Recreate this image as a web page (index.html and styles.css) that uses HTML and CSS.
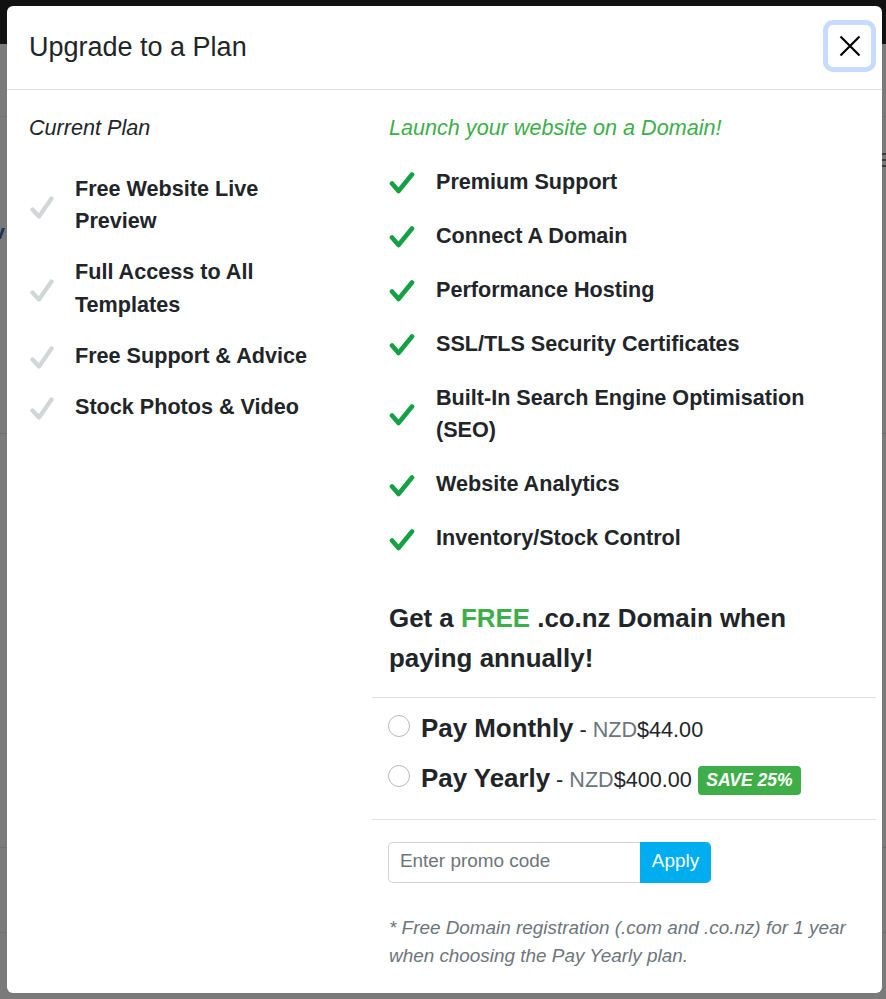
FILE: index.html
```html
<!DOCTYPE html>
<html lang="en">
<head>
<meta charset="utf-8">
<title>Upgrade to a Plan</title>
<link rel="stylesheet" href="styles.css">
</head>
<body>
<div class="page">
  <div class="topbar"></div>
  <div class="band band-a"></div>
  <div class="band band-b">
    <div class="band-row">
      <span class="ghost-mark"></span>
      <span class="menu-glyph"></span>
    </div>
  </div>
  <div class="band band-c"></div>
  <div class="band band-d"></div>
</div>

<div class="modal" role="dialog" aria-labelledby="modal-title">
  <div class="modal-header">
    <h5 class="modal-title" id="modal-title">Upgrade to a Plan</h5>
    <button class="close" type="button" aria-label="Close">
      <svg width="22" height="22" viewBox="0 0 22 22" aria-hidden="true"><path d="M1.5 1.5 L20.5 20.5 M20.5 1.5 L1.5 20.5" stroke="#000" stroke-width="2.2" fill="none"/></svg>
    </button>
  </div>
  <div class="modal-body">
    <div class="col-left">
      <p class="plan-label">Current Plan</p>
      <ul class="features features-current">
        <li><span class="icon"><svg width="24" height="27" viewBox="0 0 24 27"><path d="M2.5 15.5 L9 22.5 L21.5 4.5" stroke="#d1d6d6" stroke-width="4.2" stroke-linecap="round" stroke-linejoin="round" fill="none"/></svg></span><span class="feature-text">Free Website Live Preview</span></li>
        <li><span class="icon"><svg width="24" height="27" viewBox="0 0 24 27"><path d="M2.5 15.5 L9 22.5 L21.5 4.5" stroke="#d1d6d6" stroke-width="4.2" stroke-linecap="round" stroke-linejoin="round" fill="none"/></svg></span><span class="feature-text">Full Access to All Templates</span></li>
        <li><span class="icon"><svg width="24" height="27" viewBox="0 0 24 27"><path d="M2.5 15.5 L9 22.5 L21.5 4.5" stroke="#d1d6d6" stroke-width="4.2" stroke-linecap="round" stroke-linejoin="round" fill="none"/></svg></span><span class="feature-text">Free Support &amp; Advice</span></li>
        <li><span class="icon"><svg width="24" height="27" viewBox="0 0 24 27"><path d="M2.5 15.5 L9 22.5 L21.5 4.5" stroke="#d1d6d6" stroke-width="4.2" stroke-linecap="round" stroke-linejoin="round" fill="none"/></svg></span><span class="feature-text">Stock Photos &amp; Video</span></li>
      </ul>
    </div>

    <div class="col-right">
      <p class="plan-label green">Launch your website on a Domain!</p>
      <ul class="features features-premium">
        <li><span class="icon"><svg width="26" height="26" viewBox="0 0 26 26"><path d="M3 13.5 L9.5 21 L23 4.5" stroke="#15a045" stroke-width="4.6" stroke-linecap="round" stroke-linejoin="round" fill="none"/></svg></span><span class="feature-text">Premium Support</span></li>
        <li><span class="icon"><svg width="26" height="26" viewBox="0 0 26 26"><path d="M3 13.5 L9.5 21 L23 4.5" stroke="#15a045" stroke-width="4.6" stroke-linecap="round" stroke-linejoin="round" fill="none"/></svg></span><span class="feature-text">Connect A Domain</span></li>
        <li><span class="icon"><svg width="26" height="26" viewBox="0 0 26 26"><path d="M3 13.5 L9.5 21 L23 4.5" stroke="#15a045" stroke-width="4.6" stroke-linecap="round" stroke-linejoin="round" fill="none"/></svg></span><span class="feature-text">Performance Hosting</span></li>
        <li><span class="icon"><svg width="26" height="26" viewBox="0 0 26 26"><path d="M3 13.5 L9.5 21 L23 4.5" stroke="#15a045" stroke-width="4.6" stroke-linecap="round" stroke-linejoin="round" fill="none"/></svg></span><span class="feature-text">SSL/TLS Security Certificates</span></li>
        <li><span class="icon"><svg width="26" height="26" viewBox="0 0 26 26"><path d="M3 13.5 L9.5 21 L23 4.5" stroke="#15a045" stroke-width="4.6" stroke-linecap="round" stroke-linejoin="round" fill="none"/></svg></span><span class="feature-text">Built-In Search Engine Optimisation (SEO)</span></li>
        <li><span class="icon"><svg width="26" height="26" viewBox="0 0 26 26"><path d="M3 13.5 L9.5 21 L23 4.5" stroke="#15a045" stroke-width="4.6" stroke-linecap="round" stroke-linejoin="round" fill="none"/></svg></span><span class="feature-text">Website Analytics</span></li>
        <li><span class="icon"><svg width="26" height="26" viewBox="0 0 26 26"><path d="M3 13.5 L9.5 21 L23 4.5" stroke="#15a045" stroke-width="4.6" stroke-linecap="round" stroke-linejoin="round" fill="none"/></svg></span><span class="feature-text">Inventory/Stock Control</span></li>
      </ul>

      <p class="promo-head">Get a <span class="green-strong">FREE</span> .co.nz Domain when paying annually!</p>

      <hr class="divider divider-top">

      <div class="options">
        <label class="option">
          <span class="radio"></span>
          <span class="option-text"><strong class="option-name">Pay Monthly</strong> - <span class="muted">NZD</span>$44.00</span>
        </label>
        <label class="option">
          <span class="radio"></span>
          <span class="option-text"><strong class="option-name">Pay Yearly</strong> - <span class="muted">NZD</span>$400.00</span>
          <span class="badge">SAVE 25%</span>
        </label>
      </div>

      <hr class="divider divider-bottom">

      <div class="promo">
        <input class="promo-input" type="text" placeholder="Enter promo code">
        <button class="promo-btn" type="button">Apply</button>
      </div>

      <p class="note">* Free Domain registration (.com and .co.nz) for 1 year when choosing the Pay Yearly plan.</p>
    </div>
  </div>
</div>
</body>
</html>
```

FILE: styles.css
```css
* {
  box-sizing: border-box;
}

html, body {
  margin: 0;
  padding: 0;
}

body {
  width: 886px;
  height: 999px;
  overflow: hidden;
  background: #7a7a7a;
  font-family: "Liberation Sans", Arial, sans-serif;
  color: #212529;
  position: relative;
}

/* ---------- dimmed page behind the dialog ---------- */
.page {
  display: flex;
  flex-direction: column;
}

.topbar {
  height: 44px;
  background: #111111;
}

.band {
  border-bottom: 1px solid #6d6d6d;
}

.band-a {
  height: 73px;
  border-bottom-color: #727272;
}

.band-b {
  height: 317px;
}

.band-row {
  display: flex;
  align-items: flex-start;
  justify-content: space-between;
}

.ghost-mark {
  display: block;
  width: 3px;
  height: 11px;
  margin-top: 111px;
  background: #1d3550;
  transform: skewX(-20deg);
}

.menu-glyph {
  display: block;
  width: 14px;
  height: 14px;
  margin: 36px -10px 0 0;
  background:
    linear-gradient(#3a3a3a, #3a3a3a) 0 0 / 100% 2px no-repeat,
    linear-gradient(#3a3a3a, #3a3a3a) 0 6px / 100% 2px no-repeat,
    linear-gradient(#3a3a3a, #3a3a3a) 0 12px / 100% 2px no-repeat;
}

.band-c {
  height: 414px;
}

.band-d {
  height: 85px;
}

/* ---------- dialog ---------- */
.modal {
  position: absolute;
  top: 6px;
  left: 7px;
  width: 875px;
  background: #ffffff;
  border-radius: 6px;
}

.modal-header {
  display: flex;
  align-items: center;
  justify-content: space-between;
  padding: 21px 6px 22px 22px;
  border-bottom: 1px solid #dee2e6;
}

.modal-title {
  margin: 0;
  font-size: 27px;
  line-height: 40px;
  font-weight: 400;
  color: #212529;
}

.close {
  width: 53px;
  height: 52px;
  margin: -7px 0 -5px 0;
  padding: 0;
  display: flex;
  align-items: center;
  justify-content: center;
  background: #ffffff;
  border: 5px solid #c6dbfd;
  border-radius: 10px;
  cursor: pointer;
}

.modal-body {
  display: grid;
  grid-template-columns: 365px 504px;
  padding: 22px 0 22px 0;
}

.col-left {
  padding: 0 42px 0 22px;
}

.col-right {
  padding: 0 20px 0 17px;
}

.plan-label {
  margin: 0;
  font-size: 21.6px;
  line-height: 32.4px;
  font-style: italic;
  color: #212529;
}

.green {
  color: #3dae4a;
}

.features {
  list-style: none;
  margin: 0;
  padding: 0;
  display: flex;
  flex-direction: column;
}

.features li {
  display: flex;
  align-items: center;
}

.features-current {
  margin-top: 28.4px;
  gap: 18.6px;
}

.features-premium {
  margin-top: 21.6px;
  gap: 21.6px;
}

.icon {
  flex: 0 0 47px;
  display: flex;
  align-items: center;
}

.features-current .icon svg {
  margin: 4px 0 0 1px;
}

.features-premium .icon svg {
  margin: 2px 0 0 0;
}

.features-current .feature-text {
  margin-left: -1px;
}

.feature-text {
  font-size: 21.6px;
  line-height: 32.4px;
  font-weight: 700;
  color: #212529;
}

.promo-head {
  margin: 43px 0 0 0;
  font-size: 25.9px;
  line-height: 40px;
  font-weight: 700;
  color: #212529;
}

.green-strong {
  color: #3dae4a;
}

.divider {
  border: 0;
  border-top: 1px solid #dee2e6;
  margin-left: -17px;
  margin-right: -20px;
}

.divider-top {
  margin-top: 19.5px;
  margin-bottom: 0;
}

.divider-bottom {
  margin-top: 20.5px;
  margin-bottom: 0;
}

.options {
  display: flex;
  flex-direction: column;
  gap: 11px;
  margin-top: 11px;
}

.option {
  display: flex;
  align-items: center;
  height: 39px;
  cursor: pointer;
}

.radio {
  flex: 0 0 22px;
  width: 22px;
  height: 22px;
  margin: 0 11px 6px -1px;
  border: 1px solid #b4b8bc;
  border-radius: 50%;
  background: #ffffff;
}

.option-text {
  font-size: 21.6px;
  line-height: 39px;
  color: #212529;
  white-space: nowrap;
}

.option-name {
  font-size: 25.9px;
  font-weight: 700;
}

.muted {
  color: #6c757d;
}

.badge {
  display: inline-flex;
  align-items: center;
  height: 29px;
  margin: 4px 0 0 6px;
  padding: 0 8.5px;
  background: #3fae49;
  color: #ffffff;
  border-radius: 4px;
  font-size: 17.5px;
  font-style: italic;
  font-weight: 700;
}

.promo {
  display: flex;
  margin-top: 22px;
  margin-left: -1px;
}

.promo-input {
  width: 252px;
  height: 41px;
  padding: 0 12px 2px 11px;
  border: 1px solid #ced4da;
  border-right: 0;
  border-radius: 5px 0 0 5px;
  font-family: "Liberation Sans", Arial, sans-serif;
  font-size: 18.9px;
  color: #495057;
  outline: none;
}

.promo-input::placeholder {
  color: #6c757d;
  opacity: 1;
}

.promo-btn {
  width: 71px;
  height: 41px;
  padding: 0 0 2px 0;
  border: 0;
  border-radius: 0 5px 5px 0;
  background: #00aeef;
  color: #ffffff;
  font-family: "Liberation Sans", Arial, sans-serif;
  font-size: 18.9px;
  cursor: pointer;
}

.note {
  margin: 31px 0 0 0;
  font-size: 18.9px;
  line-height: 28.4px;
  font-style: italic;
  color: #6c757d;
}
```
